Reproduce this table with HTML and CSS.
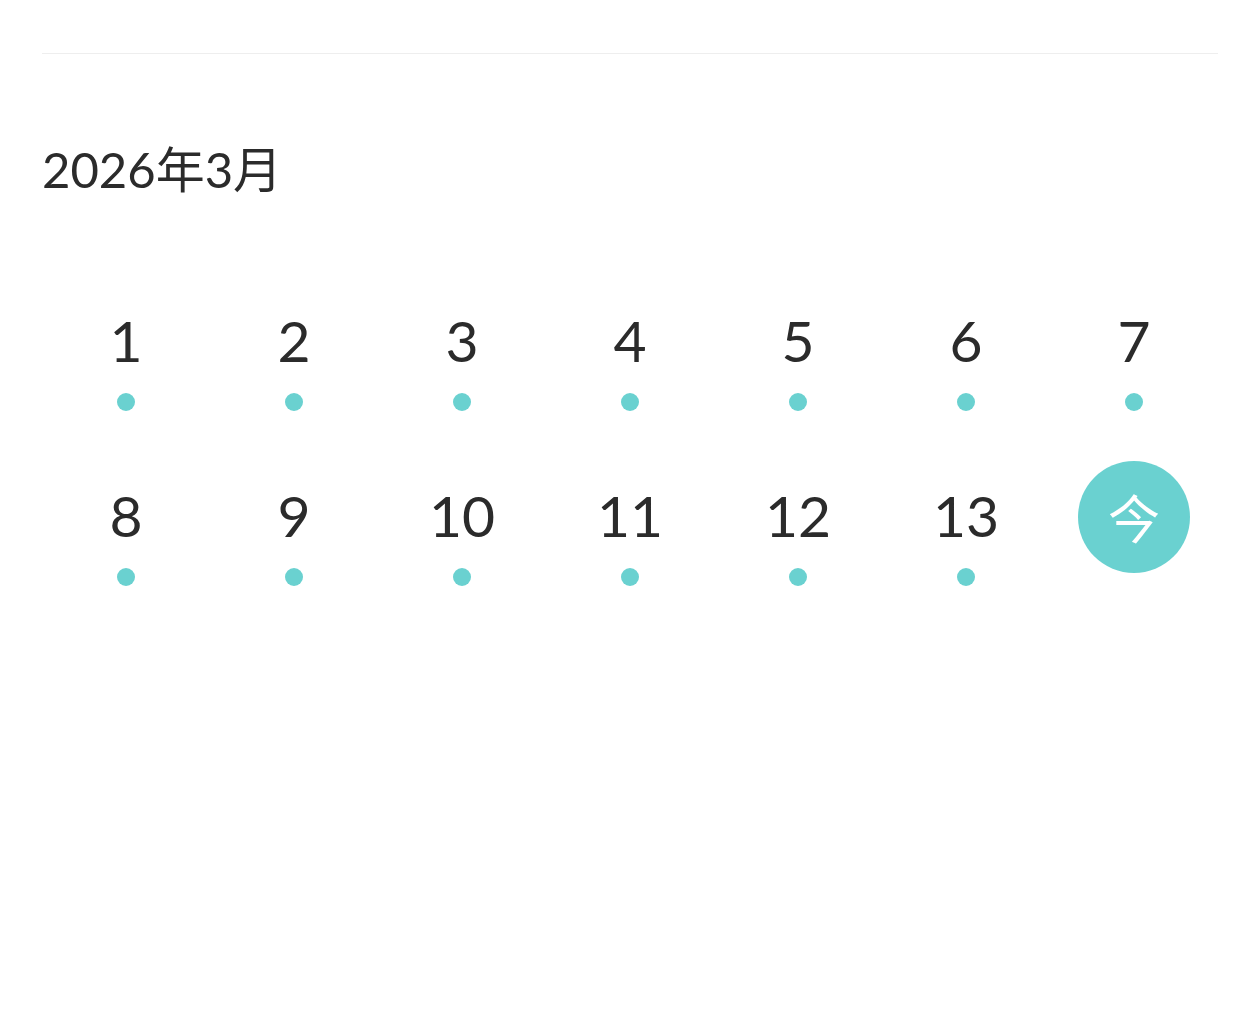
FILE: index.html
```html
<!DOCTYPE html>
<html lang="zh">
<head>
<meta charset="utf-8">
<link rel="stylesheet" href="styles.css">
</head>
<body>
<div class="page">
  <div class="divider"></div>
  <h1 class="month">2026年3月</h1>
  <div class="grid">
    <div class="cell"><div class="num">1</div><span class="dot"></span></div>
    <div class="cell"><div class="num">2</div><span class="dot"></span></div>
    <div class="cell"><div class="num">3</div><span class="dot"></span></div>
    <div class="cell"><div class="num">4</div><span class="dot"></span></div>
    <div class="cell"><div class="num">5</div><span class="dot"></span></div>
    <div class="cell"><div class="num">6</div><span class="dot"></span></div>
    <div class="cell"><div class="num">7</div><span class="dot"></span></div>
    <div class="cell"><div class="num">8</div><span class="dot"></span></div>
    <div class="cell"><div class="num">9</div><span class="dot"></span></div>
    <div class="cell"><div class="num">10</div><span class="dot"></span></div>
    <div class="cell"><div class="num">11</div><span class="dot"></span></div>
    <div class="cell"><div class="num">12</div><span class="dot"></span></div>
    <div class="cell"><div class="num">13</div><span class="dot"></span></div>
    <div class="cell"><div class="num today">今</div></div>
  </div>
</div>
</body>
</html>
```
FILE: styles.css
```css
html, body {
  margin: 0;
  padding: 0;
  background: #fff;
}
body {
  font-family: Lato, "Noto Sans CJK SC", sans-serif;
  color: #2b2b2b;
}
.page {
  padding: 53px 42px 0;
}
.divider {
  height: 1px;
  background: #eeeeee;
}
.month {
  margin: 89px 0 0;
  font-size: 49px;
  font-weight: 400;
  line-height: 52px;
}
.grid {
  margin-top: 91px;
  display: grid;
  grid-template-columns: repeat(7, 1fr);
  grid-auto-rows: 175px;
}
.cell {
  display: flex;
  flex-direction: column;
  align-items: center;
}
.num {
  width: 112px;
  height: 112px;
  box-sizing: border-box;
  padding-bottom: 4px;
  display: flex;
  align-items: center;
  justify-content: center;
  font-size: 57px;
  line-height: 1;
}
.dot {
  width: 18px;
  height: 18px;
  border-radius: 50%;
  background: #6ad1d0;
  margin-top: -5px;
}
.today {
  padding-bottom: 0;
  border-radius: 50%;
  background: #6ad1d0;
  color: #fff;
  font-family: "Noto Sans CJK SC", sans-serif;
  font-size: 52px;
}
```
